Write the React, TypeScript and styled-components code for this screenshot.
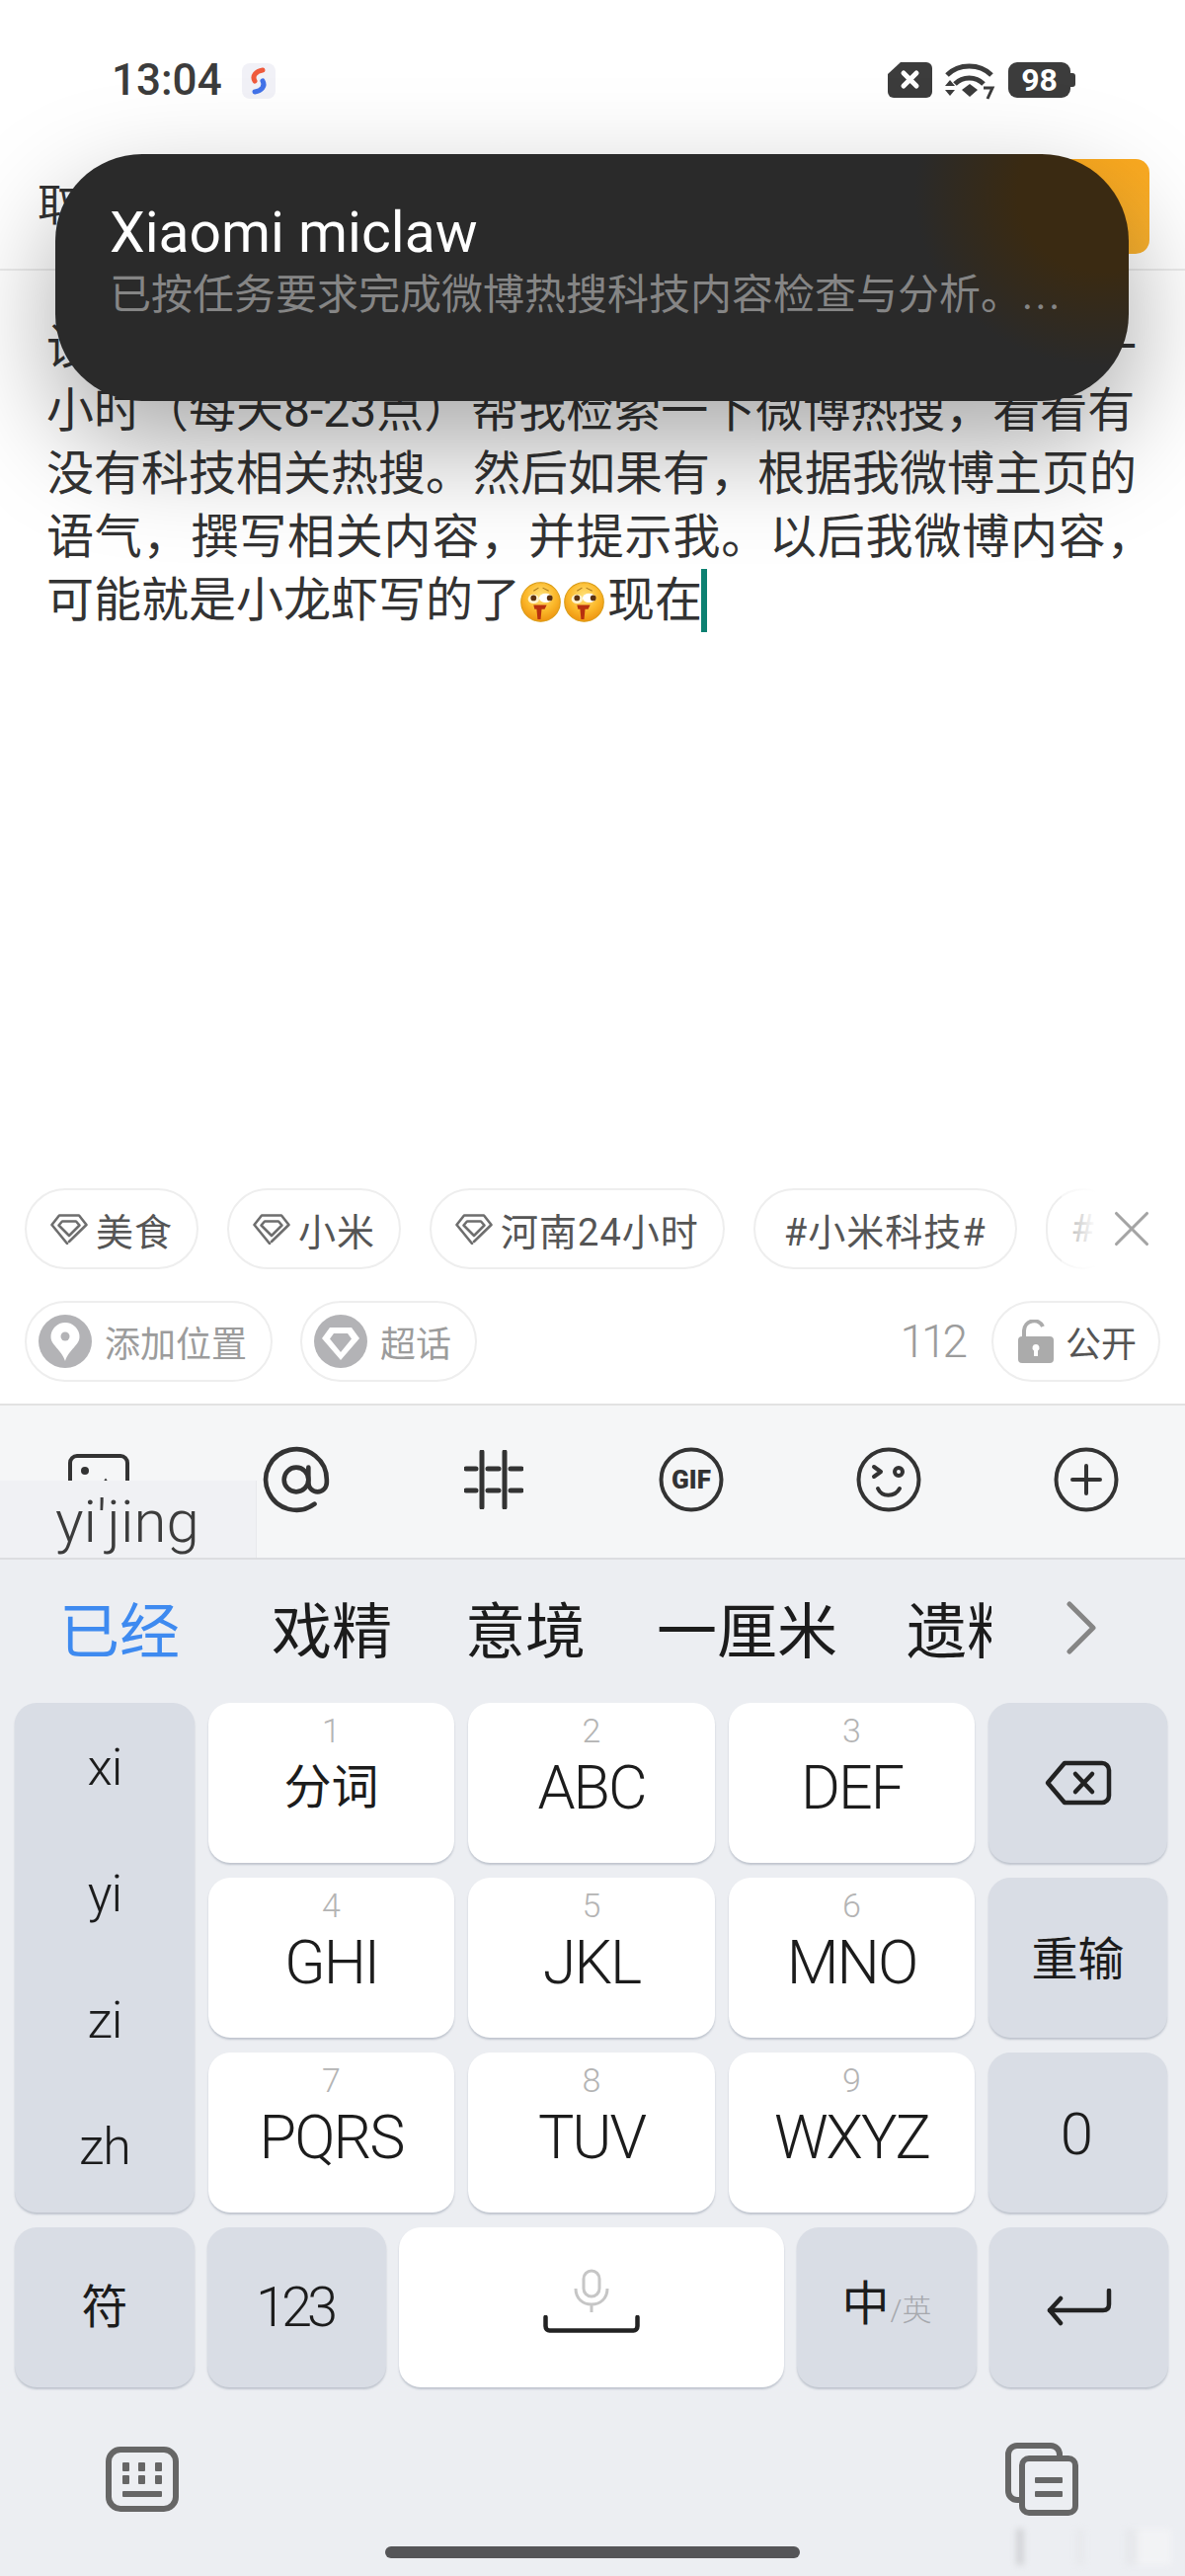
import styled, { createGlobalStyle } from "styled-components";
import { AtSign, X } from "lucide-react";

const GlobalStyle = createGlobalStyle`
  html, body { margin: 0; padding: 0; background: #fff; }
  * { box-sizing: border-box; }
`;

const Page = styled.div`
  position: relative;
  width: 1200px;
  height: 2608px;
  overflow: hidden;
  display: flex;
  flex-direction: column;
  background: #fff;
  color: #333;
  font-family: Roboto, "Noto Sans CJK SC", sans-serif;
`;

const StatusBar = styled.div`
  height: 156px;
  flex: none;
  display: flex;
  align-items: flex-start;
  padding: 56px 0 0 113px;
`;

const Clock = styled.span`
  font-size: 44px;
  line-height: 50px;
  font-weight: 500;
  color: #3c3c3c;
`;

const StatusApp = styled.div`
  width: 34px;
  height: 36px;
  margin: 8px 0 0 20px;
  border-radius: 8px;
  background: #f1f1f7;
  display: flex;
  align-items: center;
  justify-content: center;
`;

const StatusIcons = styled.div`
  margin: 7px 0 0 auto;
  width: 301px;
  display: flex;
  align-items: flex-start;
`;

const Battery = styled.div`
  position: relative;
  width: 63px;
  height: 36px;
  margin-left: 13px;
  border-radius: 9px;
  background: #3c3c3c;
  color: #fff;
  font-size: 32px;
  line-height: 36px;
  font-weight: 700;
  text-align: center;

  &::after {
    content: "";
    position: absolute;
    right: -5px;
    top: 11px;
    width: 5px;
    height: 14px;
    border-radius: 0 3px 3px 0;
    background: #3c3c3c;
  }
`;

const Header = styled.div`
  height: 118px;
  flex: none;
  display: flex;
  justify-content: space-between;
  align-items: flex-start;
  padding: 5px 36px 0 38px;
  border-bottom: 2px solid #ececec;
`;

const Cancel = styled.span`
  font-size: 44px;
  line-height: 96px;
  color: #333;
`;

const SendButton = styled.div`
  width: 150px;
  height: 96px;
  border-radius: 14px;
  background: linear-gradient(180deg, #fbaa20, #fcb32f);
  color: #fff;
  font-size: 40px;
  line-height: 96px;
  text-align: center;
`;

const Notification = styled.div`
  position: absolute;
  left: 56px;
  top: 156px;
  width: 1087px;
  height: 250px;
  padding: 50px 50px 0 55px;
  border-radius: 88px;
  background: radial-gradient(ellipse 190px 175px at 1060px 40px, #3a2a12 0%, #3a2a12 45%, rgba(58, 42, 18, 0) 100%), #2a2a2a;
  box-shadow: 0 44px 110px rgba(0, 0, 0, 0.34);
`;

const NotifTitle = styled.div`
  font-size: 57px;
  line-height: 60px;
  color: #fff;
`;

const NotifBody = styled.div`
  margin-top: 8px;
  font-size: 42px;
  line-height: 50px;
  color: #858585;
  white-space: nowrap;
`;

const NotifDots = styled.span`
  letter-spacing: 2.5px;
`;

const Editor = styled.div`
  height: 929px;
  flex: none;
  padding: 46px 0 0 47px;
  font-size: 48px;
  line-height: 64px;
  color: #333;
  white-space: nowrap;
`;

const LooseLine = styled.span`
  letter-spacing: 0.8px;
`;

const Caret = styled.span`
  display: inline-block;
  width: 6px;
  height: 64px;
  margin-left: -1px;
  background: #0d8071;
  vertical-align: top;
`;

const EmojiGlyph = styled.svg`
  width: 41px;
  height: 41px;
  margin-right: 3px;
  vertical-align: -6px;
`;

const TagRow = styled.div`
  position: relative;
  height: 82px;
  flex: none;
  display: flex;
  gap: 29px;
  padding-left: 25px;
  overflow: hidden;
`;

const Chip = styled.div<{ $muted?: boolean; $wide?: boolean }>`
  flex: none;
  height: 82px;
  padding: 0 ${(p) => (p.$wide ? 29 : 24)}px;
  display: flex;
  align-items: center;
  gap: 8px;
  border: 2px solid #eeeeee;
  border-radius: 41px;
  background: #fff;
  font-size: ${(p) => (p.$muted ? 36 : 38)}px;
  letter-spacing: ${(p) => (p.$muted ? 0 : 1)}px;
  color: ${(p) => (p.$muted ? "#9c9c9c" : "#555")};
  white-space: nowrap;
`;

const TagFade = styled.div`
  position: absolute;
  right: 0;
  top: 0;
  width: 125px;
  height: 82px;
  padding-right: 23px;
  display: flex;
  align-items: center;
  justify-content: flex-end;
  color: #a4a4a4;
  background: linear-gradient(90deg, rgba(255, 255, 255, 0.5), #fff 28%);
`;

const ActionRow = styled.div`
  height: 104px;
  flex: none;
  margin-top: 32px;
  display: flex;
  align-items: flex-start;
  gap: 28px;
  padding: 0 25px;
`;

const ActionChip = styled(Chip)`
  padding: 0 24px 0 12px;
  gap: 13px;
`;

const Counter = styled.span`
  margin-left: auto;
  font-size: 46px;
  line-height: 82px;
  font-weight: 300;
  letter-spacing: -4px;
  color: #9c9c9c;
`;

const PublicChip = styled(Chip)`
  padding: 0 22px 0 25px;
  gap: 12px;
  font-size: 36px;
  letter-spacing: 0;
`;

const Toolbar = styled.div`
  position: relative;
  height: 158px;
  flex: none;
  display: grid;
  grid-template-columns: repeat(6, 1fr);
  padding-bottom: 4px;
  align-items: center;
  justify-items: center;
  background: #f5f6f7;
  border-top: 2px solid #e2e2e2;
  border-bottom: 2px solid #dcdde0;
  color: #333;
`;

const Composition = styled.div`
  position: absolute;
  left: 0;
  bottom: 0;
  width: 260px;
  height: 78px;
  padding-left: 56px;
  background: #f0f1f4;
  border-right: 1px solid #e8e9ec;
  font-size: 60px;
  line-height: 84px;
  font-weight: 300;
  color: #3c3c3c;
`;

const Keyboard = styled.div`
  flex: 1;
  display: flex;
  flex-direction: column;
  background: #eceef2;
`;

const CandidateRow = styled.div`
  height: 145px;
  flex: none;
  display: flex;
  align-items: center;
  padding-bottom: 8px;
  font-size: 61px;
  color: #1c1c1c;
`;

const Candidate = styled.span<{ $left: number; $active?: boolean }>`
  margin-left: ${(p) => p.$left}px;
  color: ${(p) => (p.$active ? "#3e8af0" : "#1c1c1c")};
  white-space: nowrap;
`;

const ClippedCandidate = styled(Candidate)`
  width: 86px;
  overflow: hidden;
`;

const MoreArrow = styled.svg`
  margin-left: 75px;
  width: 32px;
  height: 54px;
`;

const KeyGrid = styled.div`
  display: grid;
  grid-template-columns: 182px 249px 250px 249px 181px;
  grid-auto-rows: 162px;
  gap: 15px 14px;
  padding-left: 15px;
`;

const BottomKeys = styled.div`
  display: grid;
  grid-template-columns: 182px 181px 390px 182px 181px;
  height: 162px;
  gap: 13px;
  margin-top: 15px;
  padding-left: 15px;
`;

const Key = styled.div<{ $light?: boolean }>`
  border-radius: 22px;
  background: ${(p) => (p.$light ? "#fff" : "#d9dde5")};
  box-shadow: 0 2px 2px rgba(110, 120, 140, 0.35);
  color: #1c1c1c;
  display: flex;
  flex-direction: column;
  align-items: center;
  justify-content: center;
`;

const SyllableColumn = styled(Key)`
  grid-row: span 3;
  justify-content: flex-start;
  padding-top: 2px;
`;

const Syllable = styled.div`
  height: 128px;
  line-height: 128px;
  font-size: 52px;
  font-weight: 300;
  letter-spacing: -1px;
`;

const DigitKey = styled(Key)`
  justify-content: flex-start;
  padding-top: 12px;
`;

const Digit = styled.div`
  font-size: 34px;
  line-height: 32px;
  font-weight: 300;
  color: #b4b4b4;
`;

const Letters = styled.div`
  margin-top: 14px;
  font-size: 61px;
  line-height: 56px;
  font-weight: 300;
  letter-spacing: -2px;
`;

const HanLetters = styled(Letters)`
  font-size: 48px;
  font-weight: 400;
  letter-spacing: 0;
`;

const KeyHan = styled.div`
  font-size: 47px;
  line-height: 56px;
`;

const ResetHan = styled(KeyHan)`
  margin-top: 4px;
`;

const KeyNumber = styled.div`
  font-size: 56px;
  line-height: 60px;
  font-weight: 300;
  letter-spacing: -5px;
  margin-left: -5px;
`;

const ZeroLabel = styled.div`
  margin: 4px 0 0 -2px;
  font-size: 60px;
  line-height: 60px;
  font-weight: 300;
`;

const SpaceKey = styled(Key)`
  justify-content: flex-start;
  padding-top: 42px;
  gap: 3px;
`;

const SwitchLabel = styled.div`
  display: flex;
  align-items: baseline;
  gap: 1px;
  font-size: 48px;
  line-height: 56px;
`;

const SwitchHint = styled.span`
  font-size: 30px;
  color: #a6a8ad;
  font-weight: 300;
`;

const Footer = styled.div`
  flex: none;
  height: 74px;
  margin-top: 56px;
  display: flex;
  justify-content: space-between;
  align-items: center;
  padding: 0 108px 0 107px;
`;

const HomeBar = styled.div`
  position: absolute;
  left: 390px;
  bottom: 18px;
  width: 420px;
  height: 12px;
  border-radius: 6px;
  background: #555558;
`;

const Watermark = styled.div`
  position: absolute;
  left: 1029px;
  top: 2560px;
  width: 157px;
  height: 37px;
  filter: blur(3px);
  opacity: 0.5;
  background: linear-gradient(
    90deg,
    #b9babd 0 8px,
    transparent 8px 60px,
    #e4e5e8 60px 70px,
    transparent 70px 110px,
    #e2e3e6 110px 120px,
    #f8f8f9 125px 157px
  );
`;

function Gem() {
  return (
    <svg width="38" height="31" viewBox="0 0 38 31" fill="none" stroke="#6e6e6e" strokeWidth="2.6" strokeLinejoin="round" strokeLinecap="round">
      <path d="M17 30L1.500 11 9 1.500h20L36.500 11 19 28" />
      <path d="M12 7.500h14l3.500 4L19 22 8.500 11.500z" />
    </svg>
  );
}

function PinBadge() {
  return (
    <svg width="54" height="54" viewBox="0 0 54 54">
      <circle cx="27" cy="27" r="27" fill="#b3b3b6" />
      <path d="M27 8a14.500 14.500 0 0 0-14.500 14.500C12.500 31 23 35 27 47c4-12 14.500-16 14.500-24.500A14.500 14.500 0 0 0 27 8z" fill="#fff" />
      <circle cx="27" cy="22" r="4.500" fill="#b3b3b6" />
    </svg>
  );
}

function GemBadge() {
  return (
    <svg width="54" height="54" viewBox="0 0 54 54">
      <circle cx="27" cy="27" r="27" fill="#b3b3b6" />
      <path d="M16 13h22l8 11-19 22L8 24z" fill="#fff" />
      <path d="M20 19h14l4 5.500L27 38 16 24.500z" fill="#b3b3b6" />
    </svg>
  );
}

function LockOpen() {
  return (
    <svg width="36" height="44" viewBox="0 0 36 44">
      <path d="M6 18V11a10 10 0 0 1 19-4" fill="none" stroke="#ababab" strokeWidth="4" />
      <rect x="0" y="17" width="36" height="27" rx="4" fill="#ababab" />
      <path d="M18 25a3.500 3.500 0 0 1 2 6.400V37h-4v-5.600A3.500 3.500 0 0 1 18 25z" fill="#fff" />
    </svg>
  );
}

function Emoji() {
  return (
    <EmojiGlyph viewBox="0 0 40 40">
      <defs>
        <radialGradient id="face" cx="50%" cy="35%" r="65%">
          <stop offset="0%" stopColor="#ffe27a" />
          <stop offset="60%" stopColor="#fbb82a" />
          <stop offset="100%" stopColor="#ee9410" />
        </radialGradient>
      </defs>
      <circle cx="20" cy="20" r="19.300" fill="url(#face)" stroke="#d79a12" strokeWidth="1" />
      <ellipse cx="13" cy="17" rx="5.500" ry="4.500" fill="#fff3cf" />
      <ellipse cx="25" cy="16" rx="6.500" ry="4.500" fill="#fff" />
      <circle cx="13" cy="16" r="2.800" fill="#5d3210" />
      <circle cx="29" cy="16" r="2.800" fill="#5d3210" />
      <path d="M13 9l5-3M22 6l6 3" stroke="#a8761a" strokeWidth="1" fill="none" />
      <path d="M13 23h13l-2 4h-3l-1 10h-3l-1-10h-2z" fill="#b8300f" />
    </EmojiGlyph>
  );
}

function ImageIcon() {
  return (
    <svg width="62" height="52" viewBox="0 0 62 52" fill="none" stroke="#333" strokeWidth="4">
      <path d="M2 52V9a7 7 0 0 1 7-7h44a7 7 0 0 1 7 7v43" />
      <circle cx="17" cy="17" r="4" fill="#333" stroke="none" />
      <path d="M26 46l12-18 12 18" />
    </svg>
  );
}

function HashIcon() {
  return (
    <svg width="60" height="60" viewBox="0 0 60 60" fill="none" stroke="#333" strokeWidth="5" strokeLinecap="round">
      <path d="M18 2v56M41 2v56" />
      <path d="M2 19h10M24 19h11M47 19h11M2 41h10M24 41h11M47 41h11" />
    </svg>
  );
}

function GifIcon() {
  return (
    <svg width="66" height="66" viewBox="0 0 66 66">
      <circle cx="33" cy="33" r="30.500" fill="none" stroke="#333" strokeWidth="4" />
      <text x="33" y="42" textAnchor="middle" fontFamily="Roboto, sans-serif" fontWeight="900" fontSize="26" fill="#333">
        GIF
      </text>
    </svg>
  );
}

function SmileIcon() {
  return (
    <svg width="66" height="66" viewBox="0 0 66 66" fill="none" stroke="#333" strokeWidth="4" strokeLinecap="round" strokeLinejoin="round">
      <circle cx="33" cy="33" r="30.500" />
      <path d="M18 20l7 5-7 5" />
      <circle cx="43" cy="25" r="4" />
      <path d="M22 42c4 9 17 9 22 0" />
    </svg>
  );
}

function PlusIcon() {
  return (
    <svg width="66" height="66" viewBox="0 0 66 66" fill="none" stroke="#333" strokeWidth="4" strokeLinecap="round">
      <circle cx="33" cy="33" r="30.500" />
      <path d="M33 19v28M19 33h28" />
    </svg>
  );
}

function Backspace() {
  return (
    <svg width="68" height="46" viewBox="0 0 68 46" fill="none" stroke="#222" strokeWidth="4.500" strokeLinejoin="round" strokeLinecap="round">
      <path d="M20 3h38a7 7 0 0 1 7 7v26a7 7 0 0 1-7 7H20L3 23z" />
      <path d="M31 14l17 18M48 14L31 32" />
    </svg>
  );
}

function Mic() {
  return (
    <svg width="36" height="44" viewBox="0 0 36 44" fill="none" stroke="#c6c6c6" strokeWidth="3">
      <rect x="10" y="2" width="16" height="26" rx="8" />
      <path d="M2 20c0 10 7 16 16 16s16-6 16-16M18 36v8" />
    </svg>
  );
}

function SpaceGlyph() {
  return (
    <svg width="98" height="18" viewBox="0 0 98 18" fill="none" stroke="#222" strokeWidth="4.500" strokeLinecap="round">
      <path d="M2.500 2v9c0 3 2 4.500 4 4.500h85c2 0 4-1.500 4-4.500V2" />
    </svg>
  );
}

function EnterGlyph() {
  return (
    <svg width="66" height="38" viewBox="0 0 66 38" fill="none" stroke="#222" strokeWidth="4.500" strokeLinecap="round" strokeLinejoin="round">
      <path d="M63 2v14c0 4-2 6-6 6H3" />
      <path d="M14 10L3 22l11 13" />
    </svg>
  );
}

function KeyboardIcon() {
  return (
    <svg width="74" height="66" viewBox="0 0 74 66" fill="#666">
      <rect x="3" y="3" width="68" height="60" rx="12" fill="none" stroke="#666" strokeWidth="6" />
      <rect x="17" y="16" width="7" height="9" rx="1" />
      <rect x="33" y="16" width="7" height="9" rx="1" />
      <rect x="50" y="16" width="7" height="9" rx="1" />
      <rect x="17" y="29" width="7" height="9" rx="1" />
      <rect x="33" y="29" width="7" height="9" rx="1" />
      <rect x="50" y="29" width="7" height="9" rx="1" />
      <rect x="17" y="45" width="40" height="6" rx="1" />
    </svg>
  );
}

function ClipboardIcon() {
  return (
    <svg width="74" height="74" viewBox="0 0 74 74" fill="none" stroke="#666" strokeWidth="6" strokeLinejoin="round">
      <path d="M16 58h-4a9 9 0 0 1-9-9V12a9 9 0 0 1 9-9h34a9 9 0 0 1 9 9v3" />
      <rect x="17" y="16" width="54" height="55" rx="7" fill="#eceef2" />
      <rect x="30" y="35" width="28" height="6" rx="1" fill="#666" stroke="none" />
      <rect x="30" y="49" width="28" height="6" rx="1" fill="#666" stroke="none" />
    </svg>
  );
}

const DIGIT_ROWS = [
  [
    ["1", "分词"],
    ["2", "ABC"],
    ["3", "DEF"],
  ],
  [
    ["4", "GHI"],
    ["5", "JKL"],
    ["6", "MNO"],
  ],
  [
    ["7", "PQRS"],
    ["8", "TUV"],
    ["9", "WXYZ"],
  ],
];

const RIGHT_KEYS = [<Backspace key="del" />, <ResetHan key="reset">重输</ResetHan>, <ZeroLabel key="zero">0</ZeroLabel>];

export default function App() {
  return (
    <Page>
      <GlobalStyle />
      <StatusBar>
        <Clock>13:04</Clock>
        <StatusApp>
          <svg width="24" height="30" viewBox="0 0 24 30" fill="none" strokeWidth="5" strokeLinecap="round">
            <path d="M16 4C9 5 5 10 8 15" stroke="#ef5a3c" />
            <path d="M8 26c7-1 11-6 8-11" stroke="#4272e8" />
          </svg>
        </StatusApp>
        <StatusIcons>
          <svg width="45" height="36" viewBox="0 0 45 36">
            <path d="M13 0h26a6 6 0 0 1 6 6v24a6 6 0 0 1-6 6H6a6 6 0 0 1-6-6V12z" fill="#3c3c3c" />
            <path d="M16 11l13 13M29 11L16 24" stroke="#fff" strokeWidth="5" strokeLinecap="round" />
          </svg>
          <svg width="52" height="38" viewBox="0 0 52 38" style={{ marginLeft: 12 }} fill="none" stroke="#3c3c3c" strokeWidth="5">
            <path d="M3 13c12-12 33-12 45 0" />
            <path d="M11 22c8-8 21-8 29 0" />
            <path d="M18 28l8-6 8 6-8 7z" fill="#3c3c3c" stroke="none" />
            <path d="M1 24l5-6 5 6zM1 28l5 6 5-6z" fill="#3c3c3c" stroke="none" />
            <path d="M40 26h9l-5 11" strokeWidth="3" />
          </svg>
          <Battery>98</Battery>
        </StatusIcons>
      </StatusBar>

      <Header>
        <Cancel>取消</Cancel>
        <SendButton>发送</SendButton>
      </Header>

      <Editor>
        设置一个定时任务，请小龙虾助手从今天开始每隔一
        <br />
        小时（每天8-23点）帮我检索一下微博热搜，看看有
        <br />
        没有科技相关热搜。然后如果有，根据我微博主页的
        <br />
        <LooseLine>语气，撰写相关内容，并提示我。以后我微博内容，</LooseLine>
        <br />
        可能就是小龙虾写的了
        <Emoji />
        <Emoji />
        现在
        <Caret />
      </Editor>

      <TagRow>
        <Chip>
          <Gem />
          美食
        </Chip>
        <Chip>
          <Gem />
          小米
        </Chip>
        <Chip>
          <Gem />
          河南24小时
        </Chip>
        <Chip $wide>#小米科技#</Chip>
        <Chip>#</Chip>
        <TagFade>
          <X size={62} strokeWidth={1.2} />
        </TagFade>
      </TagRow>

      <ActionRow>
        <ActionChip $muted>
          <PinBadge />
          添加位置
        </ActionChip>
        <ActionChip $muted>
          <GemBadge />
          超话
        </ActionChip>
        <Counter>112</Counter>
        <PublicChip>
          <LockOpen />
          公开
        </PublicChip>
      </ActionRow>

      <Toolbar>
        <ImageIcon />
        <AtSign size={74} strokeWidth={1.5} />
        <HashIcon />
        <GifIcon />
        <SmileIcon />
        <PlusIcon />
        <Composition>yi'jing</Composition>
      </Toolbar>

      <Keyboard>
        <CandidateRow>
          <Candidate $left={60} $active>
            已经
          </Candidate>
          <Candidate $left={93}>戏精</Candidate>
          <Candidate $left={74}>意境</Candidate>
          <Candidate $left={72}>一厘米</Candidate>
          <ClippedCandidate $left={70}>遗料</ClippedCandidate>
          <MoreArrow viewBox="0 0 32 54" fill="none" stroke="#858585" strokeWidth="5" strokeLinecap="round" strokeLinejoin="round">
            <path d="M4 3l24 24L4 51" />
          </MoreArrow>
        </CandidateRow>

        <KeyGrid>
          <SyllableColumn>
            <Syllable>xi</Syllable>
            <Syllable>yi</Syllable>
            <Syllable>zi</Syllable>
            <Syllable>zh</Syllable>
          </SyllableColumn>
          {DIGIT_ROWS.map((row, i) => [
            ...row.map(([digit, label]) => (
              <DigitKey $light key={digit}>
                <Digit>{digit}</Digit>
                {digit === "1" ? <HanLetters>{label}</HanLetters> : <Letters>{label}</Letters>}
              </DigitKey>
            )),
            <Key key={`side-${i}`}>{RIGHT_KEYS[i]}</Key>,
          ])}
        </KeyGrid>

        <BottomKeys>
          <Key>
            <KeyHan>符</KeyHan>
          </Key>
          <Key>
            <KeyNumber>123</KeyNumber>
          </Key>
          <SpaceKey $light>
            <Mic />
            <SpaceGlyph />
          </SpaceKey>
          <Key>
            <SwitchLabel>
              中<SwitchHint>/英</SwitchHint>
            </SwitchLabel>
          </Key>
          <Key>
            <EnterGlyph />
          </Key>
        </BottomKeys>

        <Footer>
          <KeyboardIcon />
          <ClipboardIcon />
        </Footer>
      </Keyboard>

      <Notification>
        <NotifTitle>Xiaomi miclaw</NotifTitle>
        <NotifBody>
          已按任务要求完成微博热搜科技内容检查与分析。<NotifDots>...</NotifDots>
        </NotifBody>
      </Notification>
      <Watermark />
      <HomeBar />
    </Page>
  );
}
